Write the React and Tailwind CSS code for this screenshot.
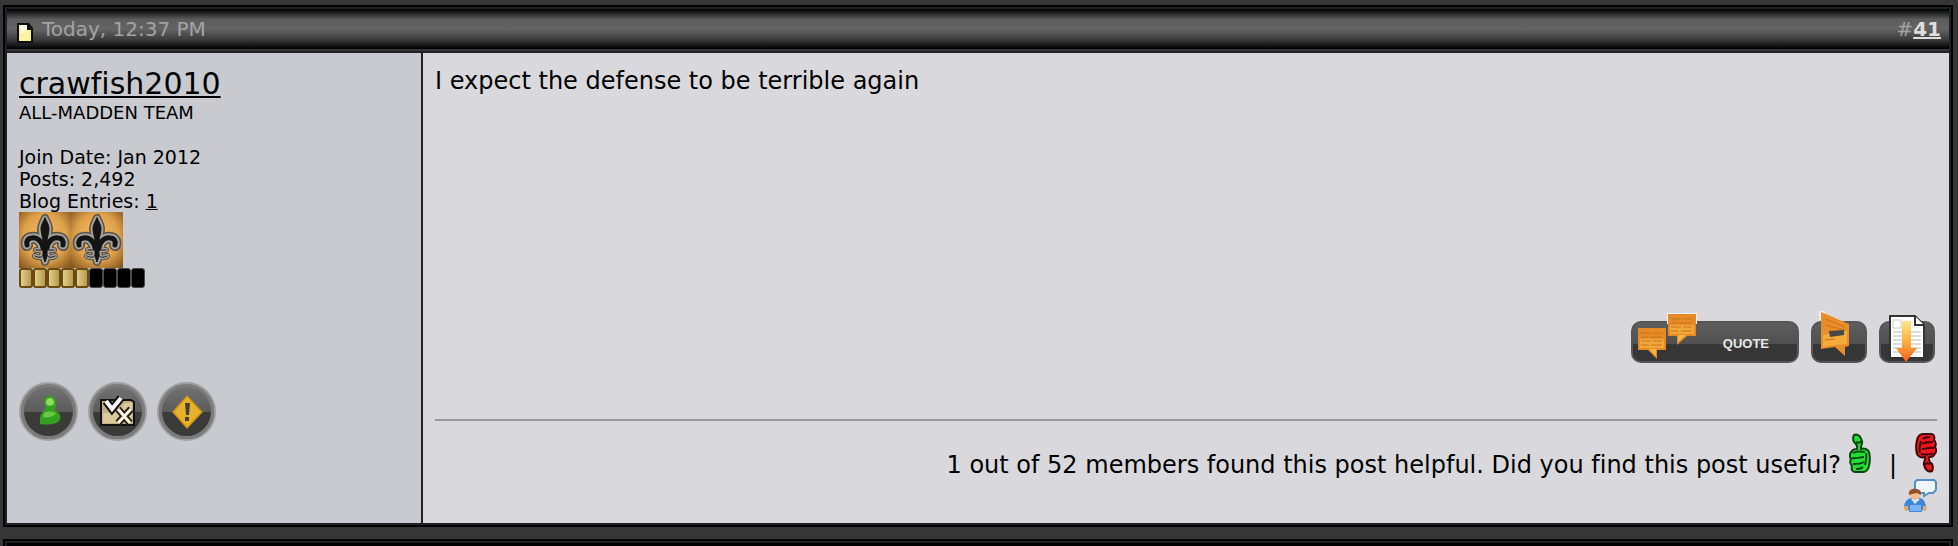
import { useId } from "react";

const rankPips = [true, true, true, true, true, false, false, false, false];

function PageIcon() {
  return (
    <svg width="16" height="20" viewBox="0 0 16 20" aria-hidden="true" className="mt-2">
      <path d="M0 0h12l4 5v15H0z" fill="#0b0b08" />
      <path d="M2 2h8v5h4v11H2z" fill="#fbf2a0" />
      <path d="M4 2h6v4l-3 4H4z" fill="#fffce8" />
    </svg>
  );
}

function FleurDeLis() {
  const id = useId();
  const spear =
    "M26 6c-2 4-4 7-4 11 0 4 2 8 2 13v14l2 6 2-6V30c0-5 2-9 2-13 0-4-2-7-4-11z";
  const petals =
    "M24 36C23 29 18 25 13 26C9 26 7 29 8 33M28 36C29 29 34 25 39 26C43 26 45 29 44 33";
  const base = "M17 38h18M25 42c-2 4-5 4-9 2M27 42c2 4 5 4 9 2";
  return (
    <svg width="52" height="56" viewBox="0 0 52 56" aria-hidden="true">
      <defs>
        <radialGradient id={id} cx="50%" cy="45%" r="70%">
          <stop offset="0" stopColor="#f8bc60" />
          <stop offset="0.6" stopColor="#dfa04a" />
          <stop offset="1" stopColor="#85591f" />
        </radialGradient>
      </defs>
      <rect width="52" height="56" fill={`url(#${id})`} />
      <g fill="none" strokeLinecap="round" strokeLinejoin="round">
        <g stroke="#5a5248">
          <path d={spear} strokeWidth="8" />
          <path d={petals} strokeWidth="12" />
          <path d={base} strokeWidth="6" />
        </g>
        <g stroke="#a5a29b">
          <path d={spear} strokeWidth="5" />
          <path d={petals} strokeWidth="9" />
          <path d={base} strokeWidth="4" />
        </g>
        <g stroke="#141414">
          <path d={spear} strokeWidth="1" fill="#141414" />
          <path d={petals} strokeWidth="5" />
          <path d={base} strokeWidth="1" />
        </g>
      </g>
    </svg>
  );
}

function RoundButton({ label, children }) {
  return (
    <button
      type="button"
      aria-label={label}
      className="size-[59px] rounded-full border-2 border-[#a0a0a3] inset-ring-3 inset-ring-[#7c7c7d] bg-linear-to-b from-[#747474] from-0% via-[#5c5c5c] via-50% to-[#3a3a39] to-50% flex items-center justify-center"
    >
      {children}
    </button>
  );
}

function UserIcon() {
  return (
    <svg width="50" height="50" viewBox="0 0 50 50" aria-hidden="true">
      <path
        d="M26 9c-5 0-7 5-5 10 1 2 0 4-2 6-3 2-3 6-3 12 5 1 16 1 19-3 3-3 1-8-3-10-2-1-1-3 0-5 1-5-1-10-6-10z"
        fill="#35a020"
      />
      <path d="M26 11c-4 0-5 4-3 7 2 1 5 1 7-1 0-4-1-6-4-6z" fill="#8fdc58" />
      <path d="M20 26c3-2 9-2 12 0-2 4-8 5-13 4z" fill="#6cc842" />
    </svg>
  );
}

function FolderIcon() {
  return (
    <svg width="50" height="50" viewBox="0 0 50 50" aria-hidden="true" className="shrink-0">
      <path d="M8 13h30l3 2v23H8z" fill="#c4b084" stroke="#111" strokeWidth="2" />
      <path d="M10 26h12l10-10h7v20H10z" fill="#d8c89c" />
      <path d="M13 14l6 8 9-11" fill="none" stroke="#111" strokeWidth="8" />
      <path d="M13 14l6 8 9-11" fill="none" stroke="#fff" strokeWidth="4" />
      <path d="M25 22l12 14M38 22L25 36" stroke="#2b2618" strokeWidth="7" />
      <path d="M25 22l12 14M38 22L25 36" stroke="#fff8e4" strokeWidth="3" />
    </svg>
  );
}

function WarningIcon() {
  return (
    <svg width="50" height="50" viewBox="0 0 50 50" aria-hidden="true">
      <path d="M25 8l16 17-16 17L10 25z" fill="#c98f18" />
      <path d="M25 10l14 15-14 15-13-15z" fill="#e6b22e" />
      <path d="M23 16h5l-1 12h-3zM23 30h4v4h-4z" fill="#4a4030" />
    </svg>
  );
}

function Bubble({ className }) {
  return (
    <svg width="30" height="34" viewBox="0 0 30 34" aria-hidden="true" className={className}>
      <path d="M1 1h28v22h-9v9l-9-9H1z" fill="#e58a25" />
      <path d="M3 12h24v9H3z" fill="#f2a73a" />
      <path d="M12 22h7v7z" fill="#f6b844" />
      <path
        d="M4 6h10M16 6h9M4 10h7M13 10h12M4 14h10M16 14h9M4 18h8M14 18h11"
        stroke="#c87420"
        strokeWidth="1"
      />
    </svg>
  );
}

function FlippedBubble({ className }) {
  return (
    <svg width="30" height="34" viewBox="0 0 30 34" aria-hidden="true" className={className}>
      <path d="M0 0h30v11H0z" fill="#f6f1ee" />
      <path d="M1 1h28v22h-9l-10 9v-9H1z" fill="#e58a25" />
      <path d="M3 12h24v9H3z" fill="#f2a73a" />
      <path d="M11 22h8l-8 7z" fill="#f6b844" />
      <path
        d="M4 6h10M16 6h9M4 10h7M13 10h12M4 14h10M16 14h9M4 18h8M14 18h11"
        stroke="#c87420"
        strokeWidth="1"
      />
    </svg>
  );
}

function QuickReplyIcon() {
  return (
    <svg width="56" height="50" viewBox="0 0 56 50" aria-hidden="true" className="absolute bottom-0 -left-0.5">
      <path d="M8 0h6v9H8z" fill="#f4efec" />
      <path d="M10 1l28 12v22l-4 1v9L24 36l-14 2z" fill="#e98d28" />
      <path d="M12 24l24-4v13l-12 1-12 2z" fill="#f4ab3c" />
      <path d="M14 8l20 8M14 14l20 5M14 29l10-1" stroke="#c87420" strokeWidth="1" />
      <path d="M18 20l15-1v5l-14 2z" fill="#4a4844" />
    </svg>
  );
}

function DownloadIcon() {
  const id = useId();
  return (
    <svg width="56" height="48" viewBox="0 0 56 48" aria-hidden="true" className="absolute -bottom-0.5 -left-0.5">
      <defs>
        <linearGradient id={id} x1="0" y1="0" x2="0" y2="1">
          <stop offset="0" stopColor="#fde88a" />
          <stop offset="0.5" stopColor="#fdb040" />
          <stop offset="1" stopColor="#f85c1c" />
        </linearGradient>
      </defs>
      <path d="M11 1h25l9 9v33H11z" fill="#fff" stroke="#333" strokeWidth="2" />
      <path d="M36 1v9h9" fill="#fff" stroke="#333" strokeWidth="2" />
      <path d="M14 5h8v8h-8z" fill="none" stroke="#ccc" strokeWidth="1" />
      <path d="M14 17h28M14 21h28M14 25h28M14 29h28M14 33h28M14 37h28" stroke="#bbb" strokeWidth="1" />
      <path d="M23 6h9v27h6L27 47 17 33h6z" fill={`url(#${id})`} />
    </svg>
  );
}

function Thumb({ color, dark, down }) {
  return (
    <svg
      width="22"
      height="40"
      viewBox="0 0 22 40"
      aria-hidden="true"
      className={down ? "rotate-180" : ""}
    >
      <path
        d="M5 2c4-2 7 2 8 6 1 3-2 5-1 8 3-1 7 0 8 3 1 4 1 10 0 14-1 4-3 6-6 6H6c-3 0-4-3-3-6-2-2-2-5-1-7-2-3-1-6 1-8 1-2 3-2 5-2 1-4-1-5-3-7-1-2-1-5 0-7z"
        fill={color}
        stroke={dark}
        strokeWidth="2"
      />
      <path
        d="M7 9c2 1 4 1 5-1M4 20c3-2 7-2 12-1M3 25c4 1 8-1 12-1M4 31c4 0 8 0 11-2M7 36c3 0 5 0 7-2M17 20c1 4 0 8-1 12"
        fill="none"
        stroke={dark}
        strokeWidth="2"
      />
    </svg>
  );
}

function CommentIcon() {
  return (
    <svg width="33" height="33" viewBox="0 0 33 33" aria-hidden="true">
      <path
        d="M13 1h17l2 2v8l-3 3h-4l-5 3v-3h-6l-3-3V3z"
        fill="#eef6ff"
        stroke="#5a8fc4"
        strokeWidth="2"
      />
      <path d="M0 27c1-5 4-8 8-8h7c4 0 6 3 7 8v4h-4v2H5v-2H1z" fill="#3f86dc" />
      <path d="M7 20l4 5 5-5z" fill="#d8ebff" />
      <path d="M6 26h11v6H6z" fill="#78b4f4" />
      <path d="M0 27h4v5H1zM19 27h4l-1 5h-3z" fill="#e8a860" />
      <circle cx="11" cy="16" r="5" fill="#f0bc8c" />
      <path d="M5 16c-1-5 3-7 8-6 4 1 4 3 4 6l-4-2-5 1z" fill="#94502c" />
    </svg>
  );
}

const darkButton =
  "relative h-[42px] rounded-[10px] border-2 border-[#56565a] bg-linear-to-b from-[#5e5e5e] from-0% via-[#505050] via-55% to-[#363636] to-55%";

export default function App() {
  return (
    <div className="h-screen overflow-hidden bg-[#373737] pt-[5px] pl-[3px] pr-[5px] font-['DejaVu_Sans',sans-serif] text-black [font-variant-ligatures:none]">
      <article className="border-2 border-black">
        <div className="border-2 border-[#1e2126]">
          <header className="h-10 flex items-center justify-between pl-[10px] pr-2 text-[20px] leading-6 text-[#a3a3a3] bg-[linear-gradient(to_bottom,#000_0%,#5c5c5c_26%,#646464_50%,#3c3c3c_76%,#000_100%)]">
            <div className="flex items-center gap-[9px]">
              <PageIcon />
              <span>Today, 12:37 PM</span>
            </div>
            <div>
              #
              <a href="#post41" className="font-bold text-[#dedede] underline">
                41
              </a>
            </div>
          </header>

          <div className="h-[2px] bg-[#373737]" />

          <div className="flex border-t-2 border-[#1e2126]">
            <aside className="w-[416px] shrink-0 border-r-2 border-[#1e2126] bg-[#c9cad0] p-3 pt-[13px]">
              <a
                href="#member"
                className="block text-[30px] leading-9 underline decoration-2 underline-offset-2"
              >
                crawfish2010
              </a>
              <div className="text-[18px] leading-[22px]">ALL-MADDEN TEAM</div>
              <div className="mt-[22px] text-[19px] leading-[22px]">
                <div>Join Date: Jan 2012</div>
                <div>Posts: 2,492</div>
                <div>
                  Blog Entries:{" "}
                  <a href="#blog" className="underline">
                    1
                  </a>
                </div>
              </div>
              <div className="flex">
                <FleurDeLis />
                <FleurDeLis />
              </div>
              <div className="flex">
                {rankPips.map((on, i) => (
                  <span
                    key={i}
                    className={
                      on
                        ? "h-5 w-[14px] rounded-[3px] border-2 border-[#6b4c10] bg-linear-to-r from-[#e0cf8c] to-[#b89a4c]"
                        : "h-5 w-[14px] rounded-[3px] border border-[#4a4a48] bg-black"
                    }
                  />
                ))}
              </div>
              <div className="mt-[94px] flex gap-[10px] pb-[70px]">
                <RoundButton label="User is online">
                  <UserIcon />
                </RoundButton>
                <RoundButton label="Rate user">
                  <FolderIcon />
                </RoundButton>
                <RoundButton label="Report post">
                  <WarningIcon />
                </RoundButton>
              </div>
            </aside>

            <section className="flex flex-1 flex-col bg-[#d9d9dd] p-3 pb-[11px] text-[24px] leading-8">
              <p>I expect the defense to be terrible again</p>

              <div className="mt-auto flex justify-end gap-3 pr-[2px] pb-14">
                <button
                  type="button"
                  className={`${darkButton} w-[168px] pt-1 pr-7 text-right font-['Liberation_Sans',sans-serif] text-[13px] leading-4 font-bold text-[#e6e6e6]`}
                >
                  <Bubble className="absolute top-1 left-1" />
                  <FlippedBubble className="absolute -top-[10px] left-[34px]" />
                  QUOTE
                </button>
                <button type="button" aria-label="Quick reply" className={`${darkButton} w-14`}>
                  <QuickReplyIcon />
                </button>
                <button type="button" aria-label="Download" className={`${darkButton} w-14`}>
                  <DownloadIcon />
                </button>
              </div>

              <hr className="border-t-2 border-[#9a9a98]" />

              <div className="mt-3 flex items-baseline justify-end leading-7">
                <span>1 out of 52 members found this post helpful. Did you find this post useful?</span>
                <button type="button" aria-label="Helpful" className="ml-2">
                  <Thumb color="#22e032" dark="#0c4412" />
                </button>
                <span className="mx-[18px]">|</span>
                <button type="button" aria-label="Not helpful">
                  <Thumb color="#ee1420" dark="#40060a" down />
                </button>
              </div>
              <div className="flex justify-end">
                <button type="button" aria-label="Comment">
                  <CommentIcon />
                </button>
              </div>
            </section>
          </div>
        </div>
      </article>

      <article className="mt-3 border-2 border-black">
        <div className="h-10 border-2 border-[#1e2126] bg-black" />
      </article>
    </div>
  );
}
